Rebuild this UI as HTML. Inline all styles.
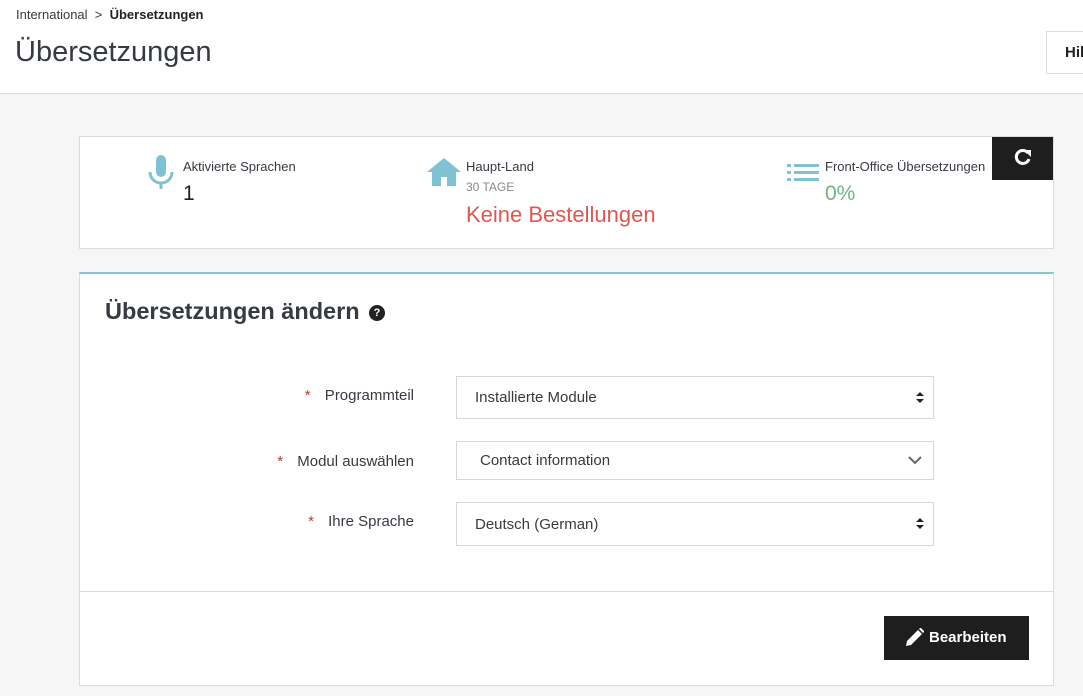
<!DOCTYPE html>
<html><head><meta charset="utf-8"><style>
*{box-sizing:border-box;margin:0;padding:0}
body{width:1083px;height:696px;overflow:hidden;background:#f6f6f6;font-family:"Liberation Sans",sans-serif;color:#363a41;position:relative}
.hdr{position:absolute;left:0;top:0;width:1083px;height:94px;background:#fff;border-bottom:1px solid #dcdcdc}
.abs{position:absolute;white-space:nowrap}
.p1{position:absolute;left:79px;top:136px;width:975px;height:113px;background:#fff;border:1px solid #dcdcdc}
.p2{position:absolute;left:79px;top:272px;width:975px;height:414px;background:#fff;border:1px solid #dcdcdc;border-top:2px solid #8cc4d2}
.sel{position:absolute;left:456px;width:478px;background:#fff;border:1px solid #d7d7d7;font-size:15px;color:#363a41;padding-left:18px}
.lbl{position:absolute;font-size:15px;color:#363a41;text-align:right;right:669px;white-space:nowrap}
.lbl b{color:#c0392b;font-weight:normal;margin-right:10px}
</style></head><body>
<div class="hdr">
<div class="abs" style="left:16px;top:7px;font-size:13px;color:#363a41">International &nbsp;&gt;&nbsp; <b style="color:#222">Übersetzungen</b></div>
<div class="abs" style="left:15px;top:36px;font-size:29px;color:#363a41">Übersetzungen</div>
<div class="abs" style="left:1046px;top:31px;width:60px;height:43px;border:1px solid #ddd;font-size:15px;font-weight:bold;padding:12px 0 0 18px;color:#222">Hilfe</div>
</div>
<div class="p1"></div>
<svg class="abs" style="left:148px;top:155px" width="26" height="35" viewBox="0 0 26 35"><rect x="8" y="0" width="10" height="22" rx="5" fill="#7fc2d4"/><path d="M2 17 a11 11 0 0 0 22 0" stroke="#7fc2d4" stroke-width="3" fill="none"/><rect x="11.5" y="27" width="3" height="7" fill="#7fc2d4"/></svg>
<div class="abs" style="left:183px;top:159px;font-size:13px">Aktivierte Sprachen</div>
<div class="abs" style="left:183px;top:182px;font-size:21px;color:#222">1</div>
<svg class="abs" style="left:426px;top:157px" width="36" height="30" viewBox="0 0 36 30"><path d="M18 1 L35 15 H30 V29 H21 V20 H15 V29 H6 V15 H1 Z" fill="#7fc2d4"/></svg>
<div class="abs" style="left:466px;top:159px;font-size:13px">Haupt-Land</div>
<div class="abs" style="left:466px;top:180px;font-size:12px;color:#888">30 TAGE</div>
<div class="abs" style="left:466px;top:202px;font-size:22px;color:#e0574f">Keine Bestellungen</div>
<svg class="abs" style="left:787px;top:163px" width="32" height="20" viewBox="0 0 32 20"><g fill="#7fc2d4"><rect x="0" y="1" width="4" height="3"/><rect x="7" y="1" width="25" height="3"/><rect x="0" y="8" width="4" height="3"/><rect x="7" y="8" width="25" height="3"/><rect x="0" y="15" width="4" height="3"/><rect x="7" y="15" width="25" height="3"/></g></svg>
<div class="abs" style="left:825px;top:159px;font-size:13px">Front-Office Übersetzungen</div>
<div class="abs" style="left:825px;top:182px;font-size:21px;color:#70b580">0%</div>
<div class="abs" style="left:992px;top:137px;width:61px;height:43px;background:#1e1e1e"></div>
<svg class="abs" style="left:1014px;top:148px" width="18" height="18" viewBox="0 0 18 18"><path d="M14 5 A6.5 6.5 0 1 0 15 11" stroke="#fff" stroke-width="3" fill="none"/><path d="M10 2 L17 2 L17 9 Z" fill="#fff"/></svg>
<div class="p2"></div>
<div class="abs" style="left:105px;top:298px;font-size:23.5px;font-weight:bold;color:#363a41">Übersetzungen ändern</div>
<div class="abs" style="left:369px;top:305px;width:16px;height:16px;border-radius:50%;background:#222;color:#fff;font-size:11px;font-weight:bold;text-align:center;line-height:16px">?</div>
<div class="lbl" style="top:387px"><b>*</b> Programmteil</div>
<div class="lbl" style="top:453px"><b>*</b> Modul auswählen</div>
<div class="lbl" style="top:513px"><b>*</b> Ihre Sprache</div>
<div class="sel" style="top:376px;height:43px;line-height:42px">Installierte Module</div>
<div class="sel" style="top:441px;height:39px;line-height:38px;padding-left:23px">Contact information<svg style="position:absolute;right:11px;top:14px" width="14" height="9" viewBox="0 0 14 9"><path d="M1 1 L7 7 L13 1" stroke="#666" stroke-width="2" fill="none"/></svg></div>
<div class="sel" style="top:502px;height:44px;line-height:43px">Deutsch (German)</div>
<svg class="abs" style="left:916px;top:392px" width="8" height="11" viewBox="0 0 8 11"><path d="M4 0 L8 4 H0Z M4 11 L8 7 H0Z" fill="#222"/></svg>
<svg class="abs" style="left:916px;top:518px" width="8" height="11" viewBox="0 0 8 11"><path d="M4 0 L8 4 H0Z M4 11 L8 7 H0Z" fill="#222"/></svg>
<div class="abs" style="left:80px;top:591px;width:973px;height:1px;background:#dcdcdc"></div>
<div class="abs" style="left:884px;top:616px;width:145px;height:44px;background:#1e1e1e;color:#fff;font-size:15px;font-weight:bold;padding:13px 0 0 45px">Bearbeiten</div>
<svg class="abs" style="left:905px;top:628px" width="19" height="19" viewBox="0 0 19 19"><path d="M1 18 L2 13 L13 2 L17 6 L6 17 Z" fill="#fff"/><path d="M14 1 L15.5 -0.5 L19.5 3.5 L18 5 Z" fill="#fff"/></svg>
</body></html>
